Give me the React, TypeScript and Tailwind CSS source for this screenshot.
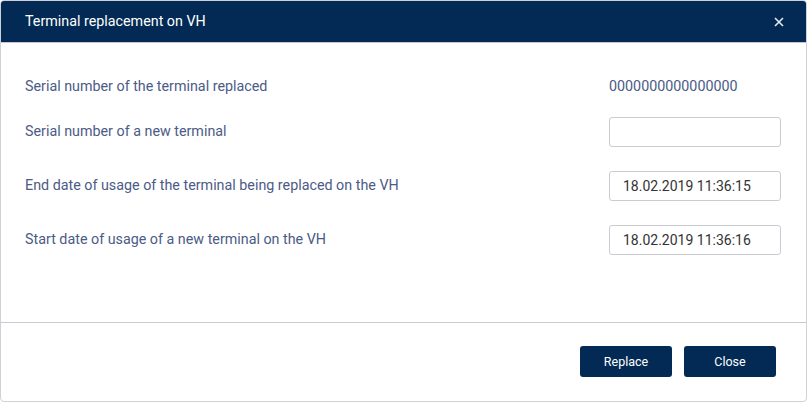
import React from "react";

const rows = [
  { label: "Serial number of a new terminal", value: "" },
  { label: "End date of usage of the terminal being replaced on the VH", value: "18.02.2019 11:36:15" },
  { label: "Start date of usage of a new terminal on the VH", value: "18.02.2019 11:36:16" },
];

export default function App() {
  return (
    <div className="w-[809px] h-[402px] bg-white font-['Roboto',sans-serif]">
      <div className="w-[807px] h-[402px] flex flex-col border border-[#cfd1d8] rounded-[4px] overflow-hidden">
        {/* header */}
        <div className="h-[42px] shrink-0 flex items-center justify-between bg-[#022a54] border-b border-[#c4c7cf] pl-[24px] pr-[22px]">
          <span className="text-white text-[14.3px]">Terminal replacement on VH</span>
          <button className="text-white/90 leading-none">
            <svg width="10" height="10" viewBox="0 0 10 10" className="stroke-current" strokeWidth="1.6">
              <path d="M1 1L9 9M9 1L1 9" />
            </svg>
          </button>
        </div>

        {/* body */}
        <div className="flex-1 pt-[29px] pl-[24px] pr-[25px] text-[14.3px] text-[#4b5b86]">
          <div className="flex items-center justify-between h-[30px]">
            <span>Serial number of the terminal replaced</span>
            <span className="w-[172px]">0000000000000000</span>
          </div>
          <div className="flex flex-col gap-[24px] mt-[15px]">
            {rows.map((row) => (
              <div key={row.label} className="flex items-center justify-between h-[30px]">
                <span>{row.label}</span>
                <input
                  readOnly
                  value={row.value}
                  className="w-[172px] h-[30px] border border-[#c9ccd2] rounded-[3px] px-[13px] text-[14px] text-[#333333] outline-none"
                />
              </div>
            ))}
          </div>
        </div>

        {/* footer */}
        <div className="h-[79px] shrink-0 border-t border-[#c9cbd1] flex items-start justify-end gap-[12px] pt-[23px] pr-[30px]">
          <button className="w-[92px] h-[31px] pt-[1px] rounded-[3px] bg-[#022a54] text-white text-[12.5px]">Replace</button>
          <button className="w-[92px] h-[31px] pt-[1px] rounded-[3px] bg-[#022a54] text-white text-[12.5px]">Close</button>
        </div>
      </div>
    </div>
  );
}
